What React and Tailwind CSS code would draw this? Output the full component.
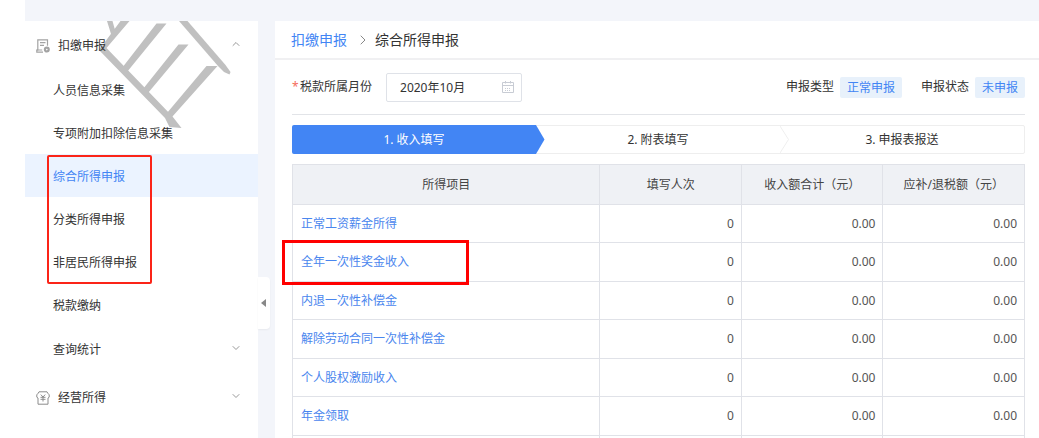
import clsx from "clsx";
import { ChevronDown, ChevronRight, ChevronUp } from "lucide-react";

const incomeMenu = ["综合所得申报", "分类所得申报", "非居民所得申报"];

const steps = ["1. 收入填写", "2. 附表填写", "3. 申报表报送"];

const rows = [
  { name: "正常工资薪金所得", count: "0", income: "0.00", tax: "0.00" },
  { name: "全年一次性奖金收入", count: "0", income: "0.00", tax: "0.00", marked: true },
  { name: "内退一次性补偿金", count: "0", income: "0.00", tax: "0.00" },
  { name: "解除劳动合同一次性补偿金", count: "0", income: "0.00", tax: "0.00" },
  { name: "个人股权激励收入", count: "0", income: "0.00", tax: "0.00" },
  { name: "年金领取", count: "0", income: "0.00", tax: "0.00" },
  { name: "", count: "", income: "", tax: "" },
];

function FormIcon() {
  return (
    <svg className="w-[14px] h-[14px]" viewBox="0 0 14 14" fill="none" stroke="#a3a3a3" strokeWidth="1.2">
      <path d="M7 13.200H.8v-2.200h1V.8h9.700v6" />
      <path d="M4 3.600h5.500M4 6.400h4M.8 11h5.400" />
      <circle cx="10.800" cy="10.600" r="1.900" strokeWidth="2.200" />
    </svg>
  );
}

function MoneyIcon() {
  return (
    <svg className="w-[14px] h-[14px]" viewBox="0 0 14 14" fill="none" stroke="#8c8c8c" strokeWidth="1">
      <path d="M3 .8h8l.8 1.400 1.400 1.600v2.400l-1.200.8v6.200H2V7L.8 6.200V3.800l1.400-1.600z" />
      <path d="M4.800 3.600l2.200 2.400 2.200-2.400M7 6v4.500M4.500 6.300h5M4.500 8.300h5" />
    </svg>
  );
}

function CalendarIcon() {
  return (
    <svg className="w-3 h-3" viewBox="0 0 12 12" fill="none" stroke="#c8ccd4">
      <path d="M.5 1.500h11v10H.5zM.5 4.500h11M3.500 0v2.500M8.500 0v2.500" />
      <path d="M3 7.500h6M3 9.500h6" strokeDasharray="1 1" />
    </svg>
  );
}

// Grey comb drawn behind the menu labels
function Comb() {
  return (
    <svg
      className="absolute left-[70px] top-0 w-[140px] h-[110px]"
      viewBox="95 21 140 110"
      fill="#c0c0c0"
      aria-hidden="true"
    >
      <path d="M107 21h5.500l2.500 9-4 4zM120.500 21h9L106.500 48l66 68.500 9 11.500-12-1-4.500-9-66-68z" />
      <path d="M156.500 23.500h10L127 72l-5-4zM178.500 44.500h10L148 93l-5-4zM206.500 66h11L172 117l-5-4z" />
      <path d="M179 21h8.500l38 44 5 7-1 2.500-5.500-2.500-6-6z" />
    </svg>
  );
}

function MenuItem({ label, active }) {
  return (
    <li>
      <a
        href="#"
        className={clsx("flex items-center h-[43px] pt-0.5 pl-7", active ? "bg-[#ebf3ff] text-[#4285f4]" : "text-[#333]")}
      >
        {label}
      </a>
    </li>
  );
}

function Sidebar() {
  return (
    <nav className="relative w-[233px] shrink-0 bg-white text-[#333]">
      <Comb />
      <div className="relative">
        <button type="button" className="flex items-center w-full h-[47px] pt-0.5 pl-[11px] pr-4">
          <FormIcon />
          <span className="ml-2">扣缴申报</span>
          <ChevronUp className="ml-auto mb-[3px] w-3 h-3 text-[#999]" strokeWidth={2} />
        </button>
        <ul>
          <MenuItem label="人员信息采集" />
          <MenuItem label="专项附加扣除信息采集" />
        </ul>
        <div className="relative">
          <ul>
            {incomeMenu.map((label, i) => (
              <MenuItem key={label} label={label} active={i === 0} />
            ))}
          </ul>
          <div className="absolute left-[22px] top-px w-[105px] h-[129px] border-2 border-[#fb2418] rounded-xs pointer-events-none" />
        </div>
        <ul>
          <MenuItem label="税款缴纳" />
        </ul>
        <button type="button" className="flex items-center w-full h-[47px] pl-7 pr-4">
          查询统计
          <ChevronDown className="ml-auto mb-[3px] w-3 h-3 text-[#999]" strokeWidth={2} />
        </button>
        <button type="button" className="flex items-center w-full h-[49px] pl-[11px] pr-4">
          <MoneyIcon />
          <span className="ml-2">经营所得</span>
          <ChevronDown className="ml-auto mb-[3px] w-3 h-3 text-[#999]" strokeWidth={2} />
        </button>
      </div>
      <button
        type="button"
        aria-label="收起"
        className="absolute left-full top-64 flex items-center w-3 h-[52px] pl-[3px] bg-white rounded-r-sm shadow-xs"
      >
        <svg className="w-[5px] h-2" viewBox="0 0 5 8" fill="#888">
          <path d="M5 0v8L0 4z" />
        </svg>
      </button>
    </nav>
  );
}

function Steps() {
  return (
    <ol className="flex h-[29px] rounded-xs border border-[#eee] text-[#333]">
      {steps.map((label, i) => (
        <li
          key={label}
          className={clsx(
            "relative flex flex-1 items-center justify-center",
            i === 0 && "-my-px -ml-px rounded-l-xs bg-[#4285f4] text-white"
          )}
        >
          {label}
          {i < 2 && (
            <svg
              className="absolute left-full top-0 w-[9px] h-full"
              viewBox="0 0 9 29"
              preserveAspectRatio="none"
              fill={i === 0 ? "#4285f4" : "none"}
              stroke={i === 0 ? "none" : "#eee"}
            >
              <path d="M0 0l8.500 14.500L0 29" />
            </svg>
          )}
        </li>
      ))}
    </ol>
  );
}

function Status({ label, value }) {
  return (
    <div className="flex items-center gap-1.5">
      <span>{label}</span>
      <span className="h-[21px] px-[7px] leading-[21px] rounded-xs bg-[#e8f1fb] text-[#4285f4]">{value}</span>
    </div>
  );
}

function IncomeTable() {
  return (
    <table className="w-full table-fixed border-collapse text-[#555]">
      <thead>
        <tr className="h-10 bg-[#eff1f5] text-[#444]">
          <th className="w-[42%] border border-[#e0e2e8] font-normal">所得项目</th>
          <th className="border border-[#e0e2e8] font-normal">填写人次</th>
          <th className="border border-[#e0e2e8] font-normal">收入额合计（元）</th>
          <th className="border border-[#e0e2e8] font-normal">应补/退税额（元）</th>
        </tr>
      </thead>
      <tbody>
        {rows.map((row, i) => (
          <tr key={i} className="odd:h-[38px] even:h-[39px]">
            <td className="border border-[#e0e2e8] px-2">
              <div className="relative">
                <a href="#" className="text-[#4a86ee]">
                  {row.name}
                </a>
                {row.marked && (
                  <div className="absolute -left-[19px] -top-[13px] w-[187px] h-[45px] border-3 border-[#f00] pointer-events-none" />
                )}
              </div>
            </td>
            <td className="border border-[#e0e2e8] px-[7px] text-right">{row.count}</td>
            <td className="border border-[#e0e2e8] px-[7px] text-right">{row.income}</td>
            <td className="border border-[#e0e2e8] px-[7px] text-right">{row.tax}</td>
          </tr>
        ))}
      </tbody>
    </table>
  );
}

export default function App() {
  return (
    <div className="h-screen overflow-hidden bg-white pl-[25px] font-['Noto_Sans','Noto_Sans_CJK_SC',sans-serif] text-xs leading-[18px]">
      <div className="flex flex-col h-full bg-[#f3f5fa] pt-[21px]">
        <div className="flex flex-1 min-h-0 gap-[17px]">
          <Sidebar />
          <main className="flex-1 min-w-0 bg-white">
            <div className="flex items-center h-[39px] pl-4 border-b-2 border-[#f0f0f2] text-sm text-[#333]">
              <a href="#" className="text-[#4285f4]">
                扣缴申报
              </a>
              <ChevronRight className="ml-2 mr-1 w-4 h-4 text-[#888]" strokeWidth={1.5} />
              <span>综合所得申报</span>
            </div>
            <div className="pl-[17px] pr-[14px]">
              <div className="flex items-center justify-between h-[55px] border-b border-[#e2e4e8] text-[#333]">
                <div className="flex items-center">
                  <label htmlFor="month" className="flex">
                    <span className="w-2 text-[#f56c5c]">*</span>
                    税款所属月份
                  </label>
                  <div className="relative ml-3.5">
                    <input
                      id="month"
                      type="text"
                      defaultValue="2020年10月"
                      className="w-[136px] h-[29px] pl-[13px] border border-[#dfe2e8] rounded-xs"
                    />
                    <div className="absolute right-2 top-2">
                      <CalendarIcon />
                    </div>
                  </div>
                </div>
                <div className="flex gap-[19px]">
                  <Status label="申报类型" value="正常申报" />
                  <Status label="申报状态" value="未申报" />
                </div>
              </div>
              <div className="py-2.5">
                <Steps />
              </div>
              <IncomeTable />
            </div>
          </main>
        </div>
      </div>
    </div>
  );
}
